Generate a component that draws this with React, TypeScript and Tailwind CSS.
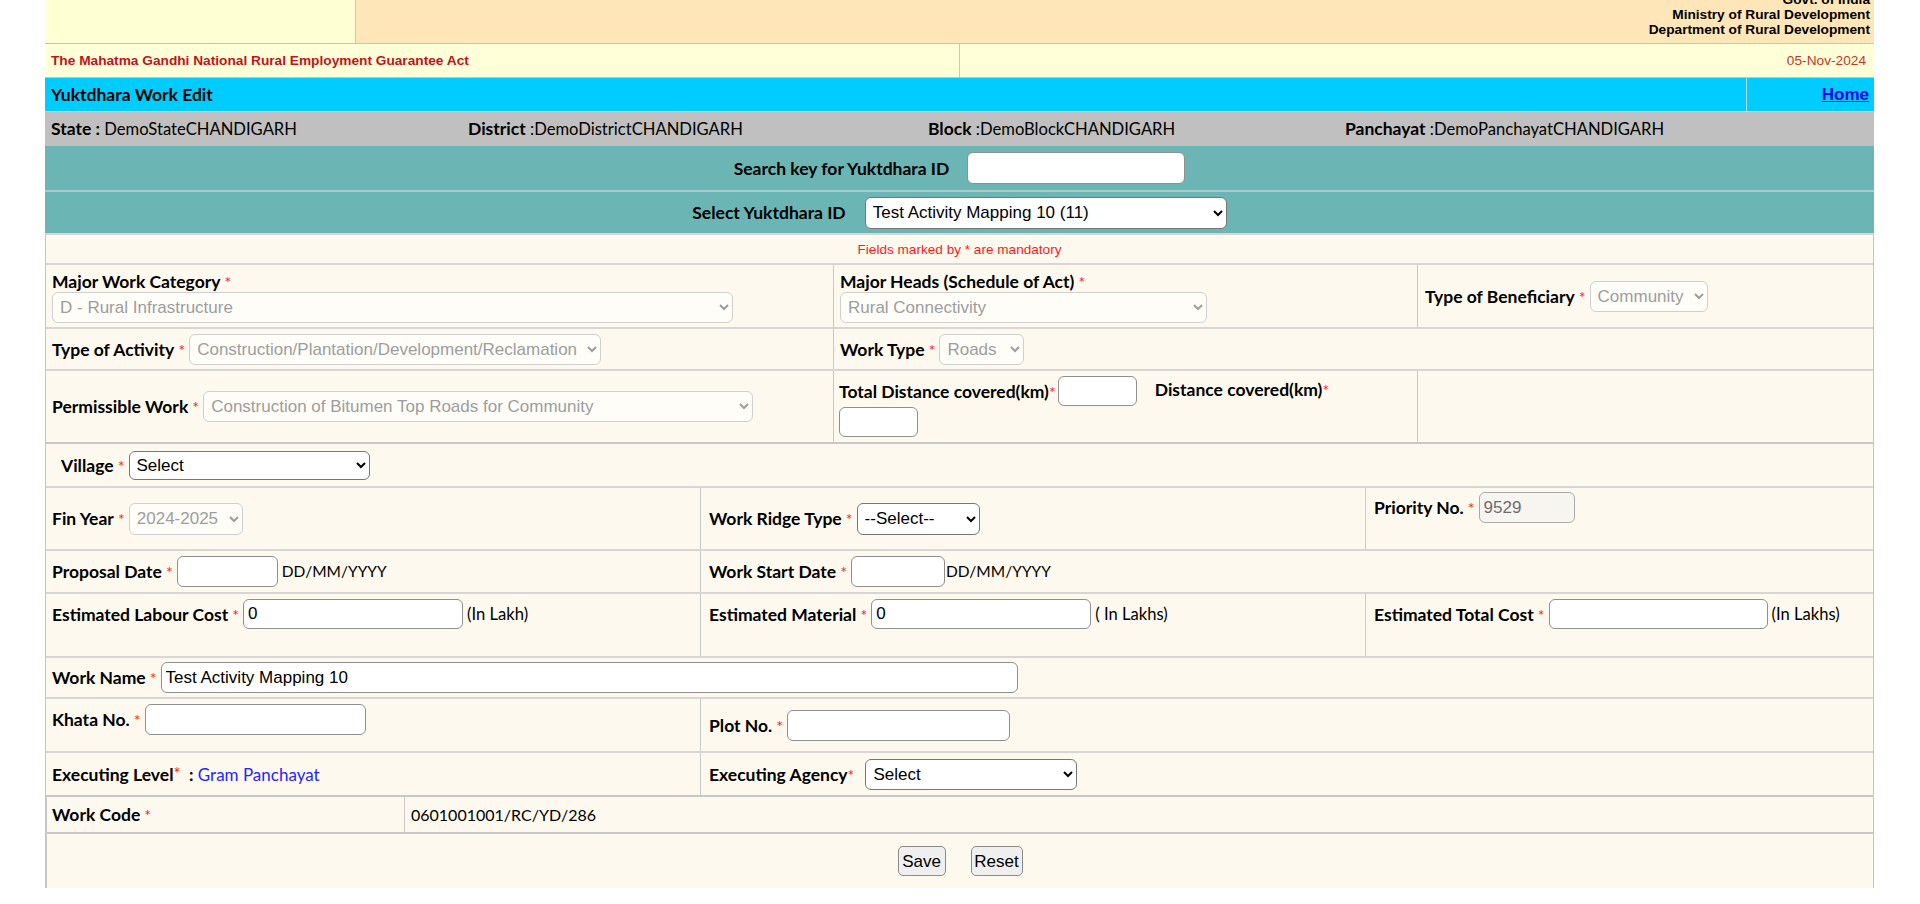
import React from 'react';

const inputBase =
  "font-['Liberation_Sans',Arial,sans-serif] text-[17px] text-black bg-white border border-[#8f8f8f] rounded-[6px] px-[4px] outline-none";
const inputRead =
  "font-['Liberation_Sans',Arial,sans-serif] text-[17px] text-[#6d6d6d] bg-[#f7f5ef] border border-[#a9a9a9] rounded-[6px] px-[4px] outline-none";
const selectBase =
  "font-['Liberation_Sans',Arial,sans-serif] text-[17px] text-black bg-white border border-[#767676] rounded-[6px] pl-[3px] outline-none";
const selectOff =
  "font-['Liberation_Sans',Arial,sans-serif] text-[17px] text-[#9d9d9d] bg-[#fefdf8] border border-[#cfcfcf] rounded-[6px] pl-[3px] outline-none";

function Star({ tight }: { tight?: boolean }) {
  return <span className="font-normal text-[16px] text-[#ff2020]">{tight ? '*' : ' *'}</span>;
}

function Label({ text, tight }: { text: string; tight?: boolean }) {
  return (
    <span className="font-bold text-[17.5px] text-black whitespace-nowrap">
      {text}
      <Star tight={tight} />
    </span>
  );
}

export default function App() {
  return (
    <div className="min-h-[904px] bg-white font-['Lato',sans-serif] text-[16.6px] leading-[19px] text-black">
      <div className="ml-[45px] w-[1829px]">
        {/* header */}
        <div className="flex h-[44px] border-b border-[#c4c4c4]">
          <div className="w-[311px] bg-[#ffffd4] border-r border-[#c8c8c8]" />
          <div className="flex-1 bg-[#ffe6b8] overflow-hidden flex flex-col items-end justify-end pr-[4px] pb-[6px] font-['Liberation_Sans',Arial,sans-serif] font-bold text-[13.7px] leading-[15px]">
            <div>Govt. of India</div>
            <div>Ministry of Rural Development</div>
            <div>Department of Rural Development</div>
          </div>
        </div>

        {/* act */}
        <div className="flex h-[34px] bg-[#ffffd8] border-b border-[#c4c4c4] font-['Liberation_Sans',Arial,sans-serif] text-[13.7px]">
          <div className="w-[915px] border-r border-[#c8c8c8] flex items-center pl-[6px] font-bold text-[#c1121f]">
            The Mahatma Gandhi National Rural Employment Guarantee Act
          </div>
          <div className="flex-1 flex items-center justify-end pr-[8px] text-[#c0392b]">05-Nov-2024</div>
        </div>

        {/* title */}
        <div className="flex h-[34px] bg-[#00ccff] border-b border-[#b8d8e0]">
          <div className="flex-1 flex items-center pl-[6px] font-bold text-[17.5px]">Yuktdhara Work Edit</div>
          <div className="w-[128px] border-l border-[#b8d8e0] flex items-center justify-end pr-[5px]">
            <a href="#" className="font-['Liberation_Sans',Arial,sans-serif] font-bold text-[17px] text-[#0000ee] underline">
              Home
            </a>
          </div>
        </div>

        {/* location */}
        <div className="flex h-[34px] bg-[#c0c0c0] items-center">
          <div className="w-[423px] pl-[6px]">
            <span className="font-bold text-[17.5px]">State : </span>DemoStateCHANDIGARH
          </div>
          <div className="w-[460px]">
            <span className="font-bold text-[17.5px]">District </span>:DemoDistrictCHANDIGARH
          </div>
          <div className="w-[417px]">
            <span className="font-bold text-[17.5px]">Block </span>:DemoBlockCHANDIGARH
          </div>
          <div className="flex-1">
            <span className="font-bold text-[17.5px]">Panchayat </span>:DemoPanchayatCHANDIGARH
          </div>
        </div>

        {/* search */}
        <div className="bg-[#6bb5b5]">
          <div className="flex h-[46px] items-center justify-center gap-[18px] border-b-2 border-[#a6cccc]">
            <span className="font-bold text-[17.5px]">Search key for Yuktdhara ID</span>
            <input className={`${inputBase} w-[218px] h-[32px]`} />
          </div>
          <div className="flex h-[43px] items-center justify-center gap-[19px] border-b-2 border-[#d6d6d6]">
            <span className="font-bold text-[17.5px]">Select Yuktdhara ID</span>
            <select className={`${selectBase} w-[362px] h-[32px]`} defaultValue="a">
              <option value="a">Test Activity Mapping 10 (11)</option>
            </select>
          </div>
        </div>

        {/* form */}
        <div className="bg-[#fdf9ee] border-x border-[#c4c4c4]">
          <div className="flex h-[30px] items-center justify-center border-b-2 border-[#d6d6d6] font-['Liberation_Sans',Arial,sans-serif] text-[13.6px] text-[#ff1a1a]">
            Fields marked by * are mandatory
          </div>

          {/* major work */}
          <div className="flex h-[64px] border-b-2 border-[#d6d6d6]">
            <div className="w-[788px] border-r border-[#c8c8c8] px-[6px] pt-[7px]">
              <Label text="Major Work Category" />
              <select disabled className={`${selectOff} block w-[681px] h-[31px]`}>
                <option>D - Rural Infrastructure</option>
              </select>
            </div>
            <div className="w-[584px] border-r border-[#c8c8c8] px-[6px] pt-[7px]">
              <Label text="Major Heads (Schedule of Act)" />
              <select disabled className={`${selectOff} block w-[367px] h-[31px]`}>
                <option>Rural Connectivity</option>
              </select>
            </div>
            <div className="flex-1 flex items-center pl-[7px] gap-[4px]">
              <Label text="Type of Beneficiary" />
              <select disabled className={`${selectOff} w-[118px] h-[31px]`}>
                <option>Community</option>
              </select>
            </div>
          </div>

          {/* activity */}
          <div className="flex h-[42px] border-b-2 border-[#d6d6d6]">
            <div className="w-[788px] border-r border-[#c8c8c8] flex items-center pl-[6px] gap-[4px]">
              <Label text="Type of Activity" />
              <select disabled className={`${selectOff} w-[412px] h-[31px]`}>
                <option>Construction/Plantation/Development/Reclamation</option>
              </select>
            </div>
            <div className="flex-1 flex items-center pl-[6px] gap-[4px]">
              <Label text="Work Type" />
              <select disabled className={`${selectOff} w-[85px] h-[31px]`}>
                <option>Roads</option>
              </select>
            </div>
          </div>

          {/* permissible */}
          <div className="flex h-[73px] border-b-2 border-[#c8c8c8]">
            <div className="w-[788px] border-r border-[#c8c8c8] flex items-center pl-[6px] gap-[4px]">
              <Label text="Permissible Work" />
              <select disabled className={`${selectOff} w-[550px] h-[31px]`}>
                <option>Construction of Bitumen Top Roads for Community</option>
              </select>
            </div>
            <div className="w-[584px] border-r border-[#c8c8c8] pl-[5px] pt-[5px]">
              <div className="flex items-center h-[30px]">
                <Label text="Total Distance covered(km)" tight />
                <input className={`${inputBase} w-[79px] h-[30px] ml-[2px]`} />
                <span className="ml-[18px] self-start pt-[4px]">
                  <Label text="Distance covered(km)" tight />
                </span>
              </div>
              <input className={`${inputBase} block w-[79px] h-[30px] mt-[1px]`} />
            </div>
            <div className="flex-1" />
          </div>

          {/* village */}
          <div className="flex h-[44px] items-center pl-[15px] gap-[4px] border-b-2 border-[#d6d6d6]">
            <Label text="Village" />
            <select className={`${selectBase} w-[241px] h-[29px]`}>
              <option>Select</option>
            </select>
          </div>

          {/* fin year */}
          <div className="flex h-[63px] border-b-2 border-[#d6d6d6]">
            <div className="w-[655px] border-r border-[#c8c8c8] flex items-center pl-[6px] gap-[4px]">
              <Label text="Fin Year" />
              <select disabled className={`${selectOff} w-[114px] h-[32px]`}>
                <option>2024-2025</option>
              </select>
            </div>
            <div className="w-[665px] border-r border-[#c8c8c8] flex items-center pl-[8px] gap-[4px]">
              <Label text="Work Ridge Type" />
              <select className={`${selectBase} w-[123px] h-[32px]`}>
                <option>--Select--</option>
              </select>
            </div>
            <div className="flex-1 pl-[8px] pt-[4px]">
              <div className="flex items-center gap-[4px]">
                <Label text="Priority No." />
                <input readOnly value="9529" className={`${inputRead} w-[96px] h-[31px]`} />
              </div>
            </div>
          </div>

          {/* dates */}
          <div className="flex h-[43px] border-b-2 border-[#d6d6d6]">
            <div className="w-[655px] border-r border-[#c8c8c8] flex items-center pl-[6px]">
              <Label text="Proposal Date" />
              <input className={`${inputBase} w-[101px] h-[31px] ml-[4px]`} />
              <span className="ml-[4px] text-[15.5px]">DD/MM/YYYY</span>
            </div>
            <div className="flex-1 flex items-center pl-[8px]">
              <Label text="Work Start Date" />
              <input className={`${inputBase} w-[94px] h-[31px] ml-[4px]`} />
              <span className="ml-[1px] text-[15.5px]">DD/MM/YYYY</span>
            </div>
          </div>

          {/* estimates */}
          <div className="flex h-[64px] border-b-2 border-[#d6d6d6]">
            <div className="w-[655px] border-r border-[#c8c8c8] pl-[6px] pt-[5px]">
              <div className="flex items-center">
                <Label text="Estimated Labour Cost" />
                <input defaultValue="0" className={`${inputBase} w-[220px] h-[30px] ml-[4px]`} />
                <span className="ml-[4px]">(In Lakh)</span>
              </div>
            </div>
            <div className="w-[665px] border-r border-[#c8c8c8] pl-[8px] pt-[5px]">
              <div className="flex items-center">
                <Label text="Estimated Material" />
                <input defaultValue="0" className={`${inputBase} w-[220px] h-[30px] ml-[4px]`} />
                <span className="ml-[4px]">( In Lakhs)</span>
              </div>
            </div>
            <div className="flex-1 pl-[8px] pt-[5px]">
              <div className="flex items-center">
                <Label text="Estimated Total Cost" />
                <input className={`${inputBase} w-[219px] h-[30px] ml-[4px]`} />
                <span className="ml-[4px]">(In Lakhs)</span>
              </div>
            </div>
          </div>

          {/* work name */}
          <div className="flex h-[41px] items-center pl-[6px] gap-[4px] border-b-2 border-[#d6d6d6]">
            <Label text="Work Name" />
            <input defaultValue="Test Activity Mapping 10" className={`${inputBase} w-[857px] h-[31px]`} />
          </div>

          {/* khata / plot */}
          <div className="flex h-[54px] border-b-2 border-[#d6d6d6]">
            <div className="w-[655px] border-r border-[#c8c8c8] pl-[6px] pt-[5px]">
              <div className="flex items-center gap-[4px]">
                <Label text="Khata No." />
                <input className={`${inputBase} w-[221px] h-[31px]`} />
              </div>
            </div>
            <div className="flex-1 flex items-center pl-[8px] gap-[4px]">
              <Label text="Plot No." />
              <input className={`${inputBase} w-[223px] h-[31px]`} />
            </div>
          </div>

          {/* executing */}
          <div className="flex h-[44px] border-b-2 border-[#c8c8c8]">
            <div className="w-[655px] border-r border-[#c8c8c8] flex items-center pl-[6px] whitespace-pre">
              <span className="font-bold text-[17.5px]">Executing Level</span>
              <span className="text-[#ff2020]">*</span>
              <span className="font-bold text-[17.5px]">  : </span>
              <span className="text-[#2424ff] text-[17px]">Gram Panchayat</span>
            </div>
            <div className="flex-1 flex items-center pl-[8px]">
              <Label text="Executing Agency" tight />
              <select className={`${selectBase} w-[212px] h-[31px] ml-[11px]`}>
                <option>Select</option>
              </select>
            </div>
          </div>

          {/* work code */}
          <div className="flex h-[37px] border-l border-b-2 border-[#c8c8c8]">
            <div className="w-[358px] border-r border-[#c8c8c8] flex items-center pl-[5px]">
              <Label text="Work Code" />
            </div>
            <div className="flex-1 flex items-center pl-[6px] text-[16px]">0601001001/RC/YD/286</div>
          </div>

          {/* buttons */}
          <div className="flex h-[54px] items-center justify-center gap-[25px] border-l border-[#c8c8c8]">
            <button className="font-['Liberation_Sans',Arial,sans-serif] text-[17px] w-[48px] h-[30px] bg-[#efefef] border border-[#8a8a8a] rounded-[5px]">
              Save
            </button>
            <button className="font-['Liberation_Sans',Arial,sans-serif] text-[17px] w-[52px] h-[30px] bg-[#efefef] border border-[#8a8a8a] rounded-[5px]">
              Reset
            </button>
          </div>
        </div>
      </div>
    </div>
  );
}
